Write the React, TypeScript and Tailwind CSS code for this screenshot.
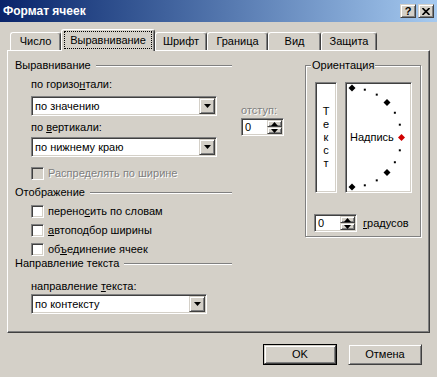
const sunken =
  'border border-t-[#808080] border-l-[#808080] border-r-white border-b-white shadow-[inset_1px_1px_0_#404040,inset_-1px_-1px_0_#d4d0c8]'
const raised =
  'border border-t-[#d4d0c8] border-l-[#d4d0c8] border-r-[#404040] border-b-[#404040] shadow-[inset_1px_1px_0_#fff,inset_-1px_-1px_0_#808080] bg-[#d4d0c8]'

const tabs = [
  { label: 'Число', w: 'w-[51px]' },
  { label: 'Выравнивание', w: 'w-[94px]', active: true },
  { label: 'Шрифт', w: 'w-[52px]' },
  { label: 'Граница', w: 'w-[61px]' },
  { label: 'Вид', w: 'w-[53px]' },
  { label: 'Защита', w: 'w-[56px]' },
]

function Down() {
  return (
    <svg width="7" height="4" viewBox="0 0 7 4">
      <polygon points="0,0 7,0 3.5,4" fill="#000" />
    </svg>
  )
}

function SmallArrow({ up }: { up?: boolean }) {
  return (
    <svg width="7" height="4" viewBox="0 0 7 4">
      <polygon points={up ? '0,4 7,4 3.5,0' : '0,0 7,0 3.5,4'} fill="#000" />
    </svg>
  )
}

function Combo({ value, w }: { value: string; w: string }) {
  return (
    <div className={`flex h-[20px] ${w} bg-white p-[1px] ${sunken}`}>
      <div className="flex-1 pl-[2px] leading-[16px]">{value}</div>
      <div className={`w-[16px] h-[16px] flex items-center justify-center ${raised}`}>
        <Down />
      </div>
    </div>
  )
}

function Spin({ w }: { w: string }) {
  return (
    <div className={`flex h-[18px] ${w} bg-white p-[1px] ${sunken}`}>
      <div className="flex-1 pl-[2px] leading-[14px]">0</div>
      <div className="flex flex-col w-[15px]">
        <div className={`h-[7px] flex items-center justify-center ${raised}`}>
          <SmallArrow up />
        </div>
        <div className={`h-[7px] flex items-center justify-center ${raised}`}>
          <SmallArrow />
        </div>
      </div>
    </div>
  )
}

function Header({ children }: { children: React.ReactNode }) {
  return (
    <div className="flex items-center w-[217px] h-[13px]">
      <span>{children}</span>
      <div className="ml-[5px] flex-1 h-[2px] border-t border-t-[#808080] border-b border-b-white" />
    </div>
  )
}

function Check({ children, disabled }: { children: React.ReactNode; disabled?: boolean }) {
  return (
    <div className="flex items-center h-[13px] gap-[4px]">
      <div className={`w-[13px] h-[13px] ${sunken} ${disabled ? 'bg-[#d4d0c8]' : 'bg-white'}`} />
      <span className={disabled ? 'text-[#808080] [text-shadow:1px_1px_0_#fff]' : ''}>{children}</span>
    </div>
  )
}

function Dial() {
  const cx = 6
  const cy = 54.5
  const r = 49.5
  const pts = []
  for (let a = 90; a >= -90; a -= 15) {
    const rad = (a * Math.PI) / 180
    const x = cx + r * Math.cos(rad)
    const y = cy - r * Math.sin(rad)
    if (a % 45 === 0) {
      const fill = a === 0 ? '#d00000' : '#000'
      pts.push(
        <polygon
          key={a}
          points={`${x},${y - 3.5} ${x + 3.5},${y} ${x},${y + 3.5} ${x - 3.5},${y}`}
          fill={fill}
        />
      )
    } else {
      pts.push(<rect key={a} x={x - 1} y={y - 1} width="2" height="2" fill="#000" />)
    }
  }
  return (
    <div className={`relative w-[67px] h-[111px] bg-white flex items-center pl-[4px] ${sunken}`}>
      <span>Надпись</span>
      <svg className="absolute inset-0" width="65" height="109" viewBox="0 0 65 109">
        {pts}
      </svg>
    </div>
  )
}

export default function App() {
  return (
    <div className="w-[437px] h-[377px] overflow-hidden bg-[#d4d0c8] text-black text-[11px] leading-[13px] font-['Liberation_Sans',Arial,sans-serif]">
      {/* title bar */}
      <div className="h-[22px] flex items-center pl-[3px] pr-[3px] bg-gradient-to-r from-[#0a246a] to-[#a6caf0]">
        <span className="flex-1 text-white font-bold text-[12px]">Формат ячеек</span>
        <div className="flex gap-[2px]">
          <div className={`w-[16px] h-[14px] flex items-center justify-center font-bold text-[11px] leading-[10px] ${raised}`}>?</div>
          <div className={`w-[16px] h-[14px] flex items-center justify-center ${raised}`}>
            <svg width="8" height="7" viewBox="0 0 8 7">
              <path d="M0.5 0 L7.5 7 M7.5 0 L0.5 7" stroke="#000" strokeWidth="1.6" />
            </svg>
          </div>
        </div>
      </div>

      {/* tabs */}
      <div className="flex items-end h-[21px] mt-[7px] pl-[10px]">
        {tabs.map((t) =>
          t.active ? (
            <div
              key={t.label}
              className={`${t.w} h-[22px] -mb-[1px] relative z-10 bg-[#d4d0c8] flex items-center justify-center rounded-t-[3px] border-t border-l border-r border-t-white border-l-white border-r-[#404040] shadow-[inset_-1px_0_0_#808080]`}
            >
              <span className="outline-1 outline-dotted outline-black px-[5px] leading-[16px] -mt-[1px]">{t.label}</span>
            </div>
          ) : (
            <div
              key={t.label}
              className={`${t.w} h-[18px] flex items-center justify-center rounded-t-[3px] border-t border-l border-r border-t-white border-l-white border-r-[#404040] shadow-[inset_-1px_0_0_#808080]`}
            >
              {t.label}
            </div>
          )
        )}
      </div>

      {/* panel */}
      <div className="ml-[7px] w-[423px] h-[283px] flex border border-t-white border-l-white border-r-[#404040] border-b-[#404040] shadow-[inset_-1px_-1px_0_#808080]">
        <div className="w-[297px] pl-[7px] pt-[8px]">
          <Header>Выравнивание</Header>
          <div className="pl-[16px]">
            <div className="flex">
              <div className="w-[186px]">
                <div className="mt-[6px]">
                  по горизо<span className="underline">н</span>тали:
                </div>
                <div className="mt-[5px]">
                  <Combo value="по значению" w="w-[186px]" />
                </div>
                <div className="mt-[5px]">
                  по <span className="underline">в</span>ертикали:
                </div>
                <div className="mt-[3px]">
                  <Combo value="по нижнему краю" w="w-[186px]" />
                </div>
              </div>
              <div className="ml-[24px]">
                <div className="mt-[32px] text-[#808080] [text-shadow:1px_1px_0_#fff]">отступ:</div>
                <div className="mt-[1px]">
                  <Spin w="w-[43px]" />
                </div>
              </div>
            </div>
            <div className="mt-[10px]">
              <Check disabled>Распределять по ширине</Check>
            </div>
          </div>
          <div className="mt-[6px]">
            <Header>Отображение</Header>
          </div>
          <div className="pl-[16px] flex flex-col gap-[6px] mt-[6px]">
            <Check>
              перено<span className="underline">с</span>ить по словам
            </Check>
            <Check>
              <span className="underline">а</span>втоподбор ширины
            </Check>
            <Check>
              об<span className="underline">ъ</span>единение ячеек
            </Check>
          </div>
          <div className="mt-[1px]">
            <Header>Направление текста</Header>
          </div>
          <div className="pl-[16px]">
            <div className="mt-[10px]">
              направление <span className="underline">т</span>екста:
            </div>
            <div className="mt-[1px]">
              <Combo value="по контексту" w="w-[176px]" />
            </div>
          </div>
        </div>

        {/* orientation group */}
        <div className="mt-[14px] w-[116px] h-[172px] border border-[#808080] shadow-[inset_1px_1px_0_#fff,1px_1px_0_#fff]">
          <div className="-mt-[7px] ml-[5px] px-[1px] w-fit bg-[#d4d0c8]">Ориентация</div>
          <div className="flex gap-[8px] pl-[9px] mt-[10px]">
            <div className={`w-[22px] h-[111px] bg-white flex flex-col items-center justify-center ${sunken}`}>
              {['Т', 'е', 'к', 'с', 'т'].map((c, i) => (
                <span key={i}>{c}</span>
              ))}
            </div>
            <Dial />
          </div>
          <div className="flex items-center gap-[6px] pl-[8px] mt-[21px]">
            <Spin w="w-[43px]" />
            <span>
              <span className="underline">г</span>радусов
            </span>
          </div>
        </div>
      </div>

      {/* buttons */}
      <div className="flex justify-end gap-[11px] pr-[15px] mt-[11px]">
        <div className="w-[74px] h-[21px] border border-black">
          <div className={`w-full h-full flex items-center justify-center ${raised}`}>OK</div>
        </div>
        <div className={`w-[74px] h-[21px] flex items-center justify-center ${raised}`}>Отмена</div>
      </div>
    </div>
  )
}
